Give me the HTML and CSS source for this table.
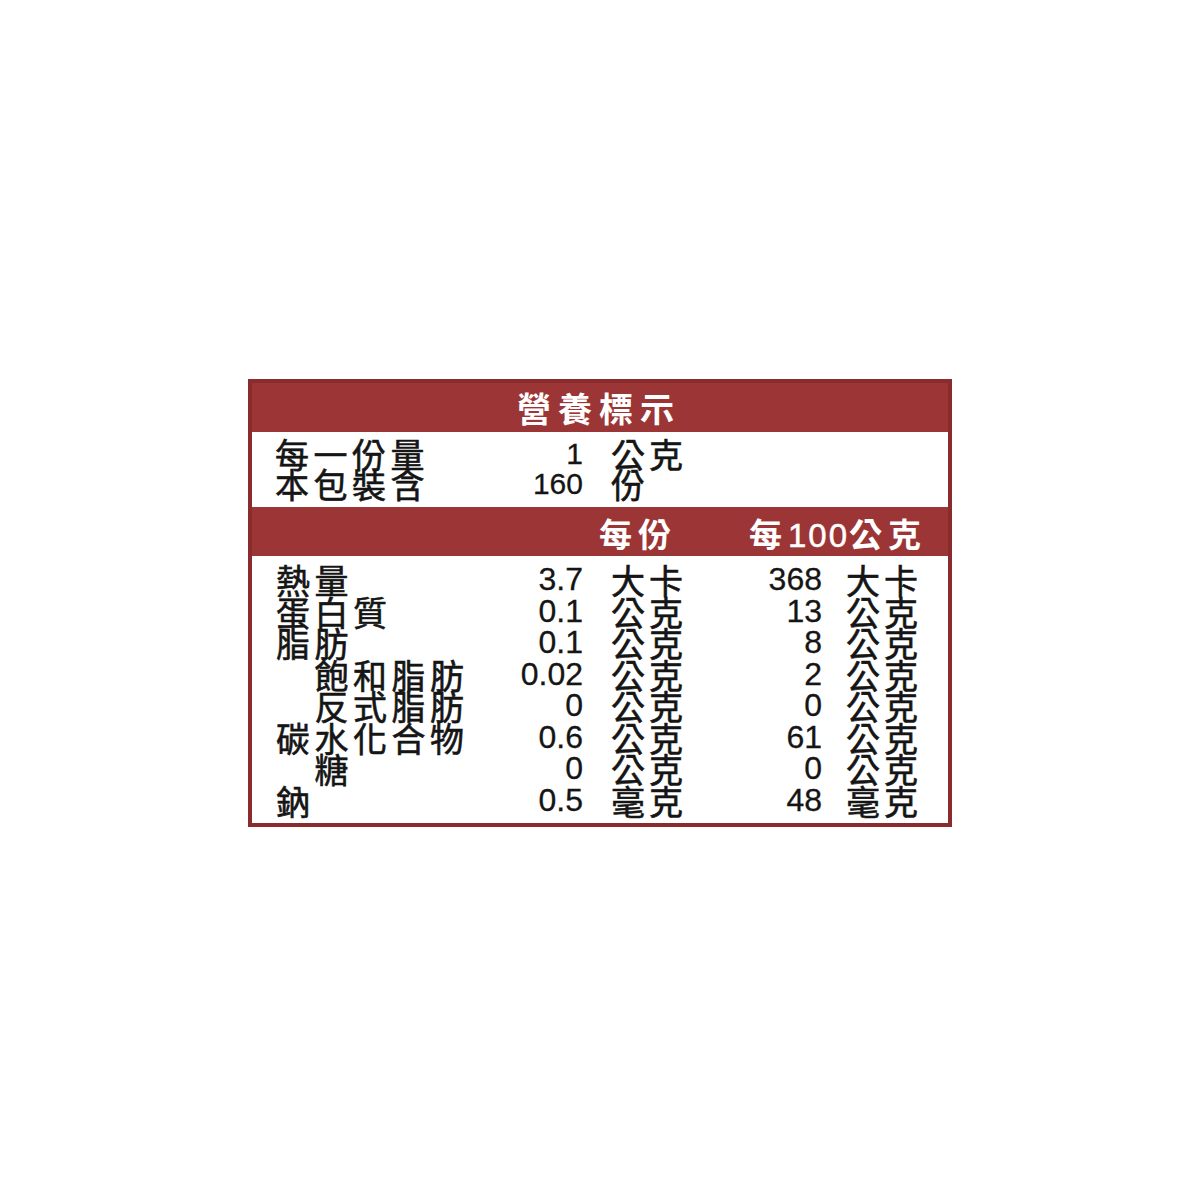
FILE: index.html
```html
<!DOCTYPE html>
<html lang="zh-Hant">
<head>
<meta charset="utf-8">
<title>營養標示</title>
<link rel="stylesheet" href="styles.css">
</head>
<body>
<div class="label">
  <div class="title">營養標示</div>
  <div class="serving">
    <div class="row srow"><span class="name">每一份量</span><span class="num">1</span><span class="unit">公克</span></div>
    <div class="row srow"><span class="name">本包裝含</span><span class="num">160</span><span class="unit">份</span></div>
  </div>
  <div class="colhead"><span class="ch">每份</span><span class="ch">每<span class="d">100</span>公克</span></div>
  <div class="facts">
    <div class="row"><span class="name">熱量</span><span class="num">3.7</span><span class="unit">大卡</span><span class="num">368</span><span class="unit u2">大卡</span></div>
    <div class="row"><span class="name">蛋白質</span><span class="num">0.1</span><span class="unit">公克</span><span class="num">13</span><span class="unit u2">公克</span></div>
    <div class="row"><span class="name">脂肪</span><span class="num">0.1</span><span class="unit">公克</span><span class="num">8</span><span class="unit u2">公克</span></div>
    <div class="row"><span class="name sub">飽和脂肪</span><span class="num">0.02</span><span class="unit">公克</span><span class="num">2</span><span class="unit u2">公克</span></div>
    <div class="row"><span class="name sub">反式脂肪</span><span class="num">0</span><span class="unit">公克</span><span class="num">0</span><span class="unit u2">公克</span></div>
    <div class="row"><span class="name">碳水化合物</span><span class="num">0.6</span><span class="unit">公克</span><span class="num">61</span><span class="unit u2">公克</span></div>
    <div class="row"><span class="name sub">糖</span><span class="num">0</span><span class="unit">公克</span><span class="num">0</span><span class="unit u2">公克</span></div>
    <div class="row"><span class="name">鈉</span><span class="num">0.5</span><span class="unit">毫克</span><span class="num">48</span><span class="unit u2">毫克</span></div>
  </div>
</div>
</body>
</html>
```
FILE: styles.css
```css
* { box-sizing: border-box; }
html, body { margin: 0; padding: 0; background: #ffffff; }
body {
  font-family: "Noto Sans CJK TC", "Liberation Sans", sans-serif;
  color: #151515;
}
.label {
  margin: 379px 0 0 248px;
  width: 704px;
  border: 4px solid #8a2c2e;
  background: #ffffff;
}
.title {
  height: 49px;
  line-height: 49px;
  background: #9c3535;
  color: #ffffff;
  text-align: center;
  font-size: 34px;
  font-weight: 700;
  letter-spacing: 7px;
  padding-right: 2px;
}
.serving {
  height: 75px;
  padding-top: 7px;
}
.row {
  display: grid;
  grid-template-columns: 248px 83px 107px 132px 1fr;
  height: 31.5px;
  line-height: 31px;
  white-space: nowrap;
}
.srow {
  height: 30px;
  line-height: 30px;
}
.name {
  padding-left: 24px;
  font-size: 34px;
  letter-spacing: 4.5px;
  -webkit-text-stroke: 0.6px #151515;
}
.name.sub { padding-left: 62.5px; }
.num {
  font-family: "Liberation Sans", Arial, sans-serif;
  font-size: 32px;
  text-align: right;
  -webkit-text-stroke: 0.3px #151515;
}
.srow .num { font-size: 30px; }
.srow .name { padding-left: 23px; letter-spacing: 4.5px; }
.unit {
  padding-left: 28px;
  font-size: 34px;
  letter-spacing: 4px;
  -webkit-text-stroke: 0.6px #151515;
}
.unit.u2 { padding-left: 24px; }
.colhead {
  height: 49px;
  line-height: 49px;
  padding-top: 2px;
  background: #9c3535;
  color: #ffffff;
  display: flex;
  justify-content: flex-end;
  gap: 72px;
  padding-right: 21px;
  font-size: 33px;
  font-weight: 700;
  white-space: nowrap;
}
.ch { letter-spacing: 6px; }
.ch .d {
  font-family: "Liberation Sans", Arial, sans-serif;
  font-weight: 400;
  letter-spacing: 2px;
  -webkit-text-stroke: 0.5px #ffffff;
}
.facts {
  padding-top: 8px;
  padding-bottom: 7px;
}
```
